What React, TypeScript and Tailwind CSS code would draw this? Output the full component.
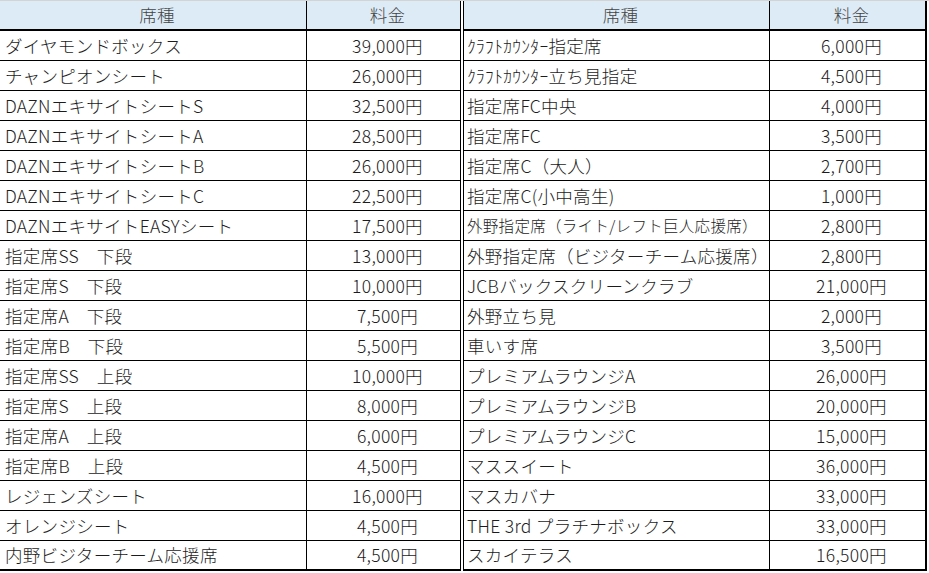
import React from 'react';

type Row = { name: string; price: string; small?: boolean };

// 左側の表
const leftRows: Row[] = [
  { name: 'ダイヤモンドボックス', price: '39,000円' },
  { name: 'チャンピオンシート', price: '26,000円' },
  { name: 'DAZNエキサイトシートS', price: '32,500円' },
  { name: 'DAZNエキサイトシートA', price: '28,500円' },
  { name: 'DAZNエキサイトシートB', price: '26,000円' },
  { name: 'DAZNエキサイトシートC', price: '22,500円' },
  { name: 'DAZNエキサイトEASYシート', price: '17,500円' },
  { name: '指定席SS　下段', price: '13,000円' },
  { name: '指定席S　下段', price: '10,000円' },
  { name: '指定席A　下段', price: '7,500円' },
  { name: '指定席B　下段', price: '5,500円' },
  { name: '指定席SS　上段', price: '10,000円' },
  { name: '指定席S　上段', price: '8,000円' },
  { name: '指定席A　上段', price: '6,000円' },
  { name: '指定席B　上段', price: '4,500円' },
  { name: 'レジェンズシート', price: '16,000円' },
  { name: 'オレンジシート', price: '4,500円' },
  { name: '内野ビジターチーム応援席', price: '4,500円' },
];

// 右側の表
const rightRows: Row[] = [
  { name: 'ｸﾗﾌﾄｶｳﾝﾀｰ指定席', price: '6,000円' },
  { name: 'ｸﾗﾌﾄｶｳﾝﾀｰ立ち見指定', price: '4,500円' },
  { name: '指定席FC中央', price: '4,000円' },
  { name: '指定席FC', price: '3,500円' },
  { name: '指定席C（大人）', price: '2,700円' },
  { name: '指定席C(小中高生)', price: '1,000円' },
  { name: '外野指定席（ライト/レフト巨人応援席）', price: '2,800円', small: true },
  { name: '外野指定席（ビジターチーム応援席）', price: '2,800円' },
  { name: 'JCBバックスクリーンクラブ', price: '21,000円' },
  { name: '外野立ち見', price: '2,000円' },
  { name: '車いす席', price: '3,500円' },
  { name: 'プレミアムラウンジA', price: '26,000円' },
  { name: 'プレミアムラウンジB', price: '20,000円' },
  { name: 'プレミアムラウンジC', price: '15,000円' },
  { name: 'マススイート', price: '36,000円' },
  { name: 'マスカバナ', price: '33,000円' },
  { name: 'THE 3rd プラチナボックス', price: '33,000円' },
  { name: 'スカイテラス', price: '16,500円' },
];

function PriceTable({ rows, nameWidth, priceWidth, namePad, right }: {
  rows: Row[];
  nameWidth: string;
  priceWidth: string;
  namePad: string;
  right?: boolean;
}) {
  return (
    <div className={right ? 'border-l border-r-2 border-black' : 'border-r border-black'}>
      <div className="flex h-[30px] border-b-2 border-black bg-[#ddebf7] text-[#444]">
        <div className={`${nameWidth} flex items-center justify-center pl-[8px] border-r border-black`}>席種</div>
        <div className={`${priceWidth} flex items-center justify-center pl-[8px]`}>料金</div>
      </div>
      {rows.map((r, i) => (
        <div
          key={r.name}
          className={`flex h-[30px] border-black ${i === rows.length - 1 ? 'border-b-2' : 'border-b'}`}
        >
          <div
            className={`${nameWidth} ${namePad} flex items-center whitespace-nowrap overflow-hidden border-r border-black ${
              r.small ? 'text-[15.5px]' : ''
            }`}
          >
            {r.name}
          </div>
          <div className={`${priceWidth} flex items-center justify-center pl-[8px]`}>{r.price}</div>
        </div>
      ))}
    </div>
  );
}

export default function App() {
  return (
    <div
      className="w-[929px] h-[573px] bg-white border-t border-[#d4d4d4] text-[17.5px] font-light tracking-[0.3px] leading-none text-[#1c1c1c] overflow-hidden"
      style={{ fontFamily: '"Noto Sans CJK JP", "Noto Sans", sans-serif' }}
    >
      <div className="flex gap-[2px]">
        <PriceTable rows={leftRows} nameWidth="w-[307px]" priceWidth="w-[153px]" namePad="pl-[5px]" />
        <PriceTable rows={rightRows} nameWidth="w-[306px]" priceWidth="w-[155px]" namePad="pl-[3px]" right />
      </div>
    </div>
  );
}
